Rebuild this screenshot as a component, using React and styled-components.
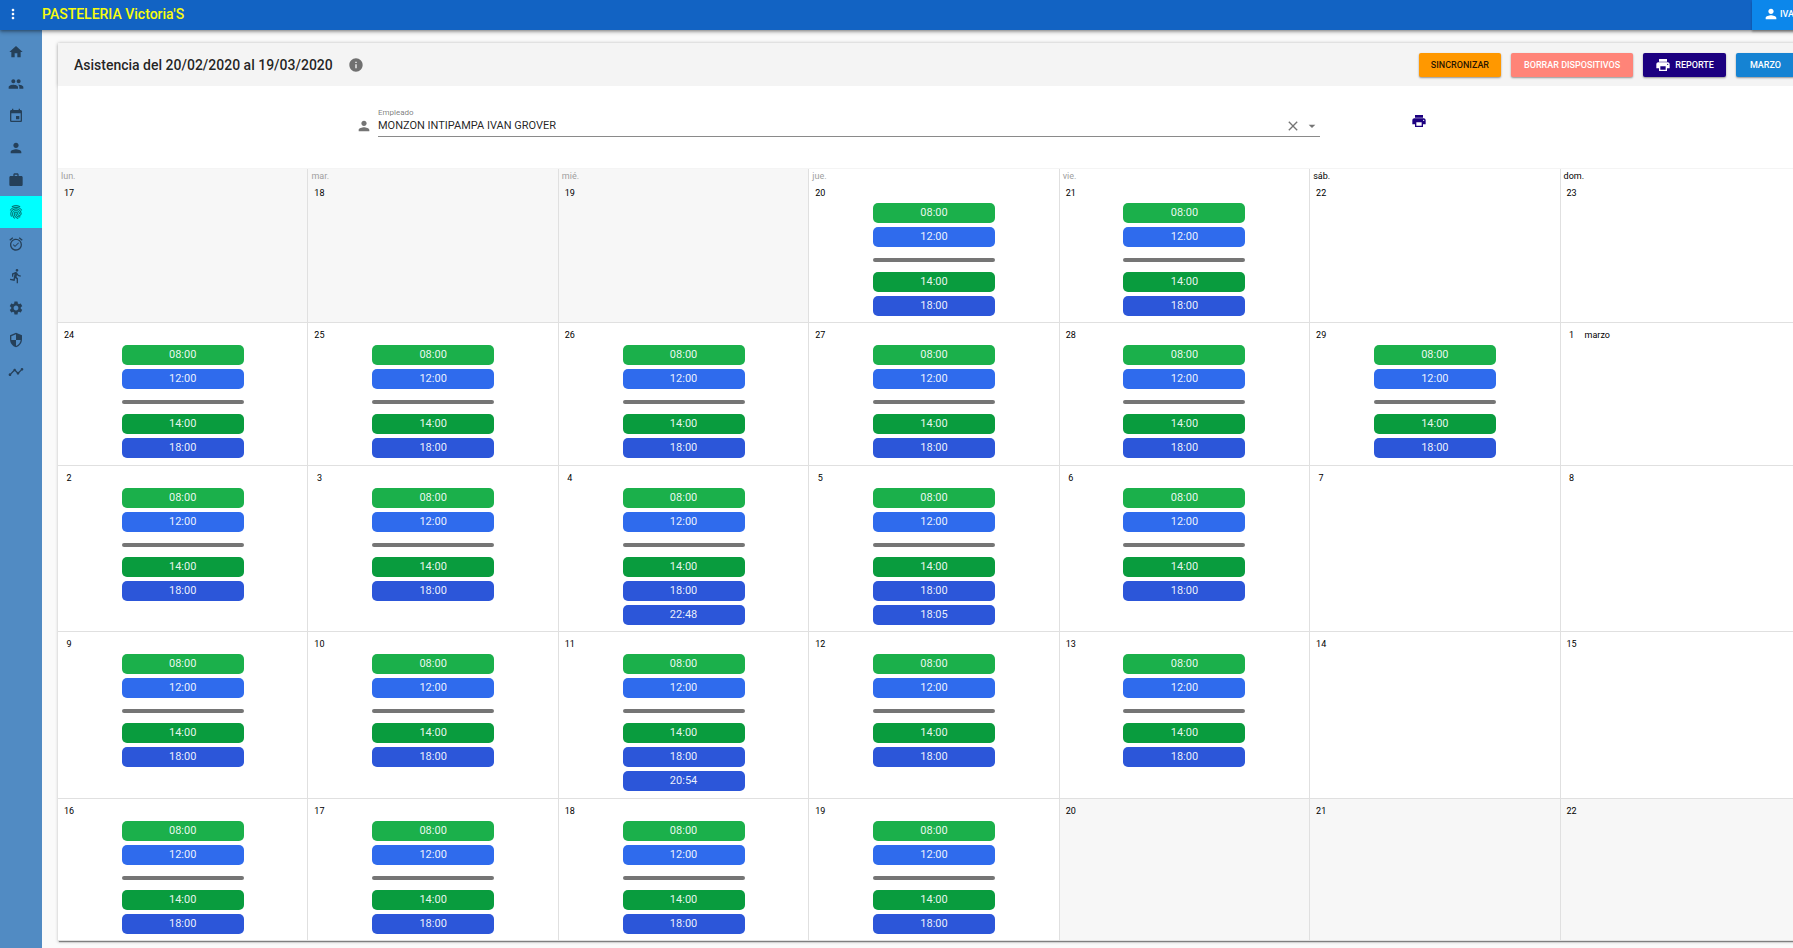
import React from 'react';
import styled, { createGlobalStyle } from 'styled-components';
import {
  MdAlarmOn, MdArrowDropDown, MdClear, MdDirectionsRun, MdEvent, MdFingerprint,
  MdHome, MdInfo, MdMoreVert, MdPeople, MdPerson, MdPrint, MdSecurity,
  MdSettings, MdTimeline, MdWork,
} from 'react-icons/md';

const GlobalStyle = createGlobalStyle`
  *, *::before, *::after { box-sizing: border-box; }
  body {
    margin: 0;
    overflow: hidden;
    background: #fafafa;
    color: rgba(0, 0, 0, 0.87);
    font-family: Roboto, "Liberation Sans", sans-serif;
    font-size: 11px;
  }
  button, select { font: inherit; color: inherit; border: 0; cursor: pointer; }
  h1, h2, p, ul, ol { margin: 0; padding: 0; font-size: inherit; font-weight: inherit; list-style: none; }
`;

/* The layout is a little wider than the window and runs off its right edge. */
const Page = styled.div`
  display: flex;
  flex-direction: column;
  width: calc(100% + 34px);
  min-height: 100vh;
`;

const TopBar = styled.header`
  position: relative;
  z-index: 2;
  display: flex;
  align-items: center;
  height: 30px;
  padding-bottom: 2px;
  flex: none;
  background: #1263c3;
  box-shadow: 0 1px 3px rgba(0, 0, 0, 0.4), 0 3px 4px rgba(0, 0, 0, 0.14);
`;

const IconButton = styled.button`
  display: flex;
  align-items: center;
  justify-content: center;
  width: ${(p) => p.$size || 16}px;
  height: ${(p) => p.$size || 16}px;
  padding: 0;
  background: transparent;
  color: ${(p) => p.$color || 'rgba(0, 0, 0, 0.54)'};
  font-size: 16px;
`;

const Brand = styled.h1`
  flex: 1;
  padding-left: 16px;
  color: #f8fc0c;
  font-size: 14px;
  font-weight: 500;
`;

const UserButton = styled.button`
  display: flex;
  align-items: center;
  width: 75px;
  height: 30px;
  margin-bottom: -2px;
  padding: 0 11px 2px;
  gap: 1px;
  background: #0c87eb;
  color: #fff;
  font-size: 9px;
  font-weight: 500;
  box-shadow: 0 2px 2px rgba(0, 0, 0, 0.25);
  svg { font-size: 16px; }
`;

const Body = styled.div`
  display: flex;
  flex: 1;
`;

const SideBar = styled.nav`
  flex: none;
  width: 42px;
  padding-top: 6px;
  background: #518bc3;
`;

const SideLink = styled.a`
  display: flex;
  align-items: center;
  height: 32px;
  padding-left: 8px;
  color: rgba(0, 0, 0, 0.54);
  background: ${(p) => (p.$active ? '#00ffff' : 'transparent')};
  font-size: 16px;
  path[fill="none"] { stroke: none; }
  svg { stroke-width: ${(p) => (p.$active ? 0.4 : 0)}; }
`;

const Main = styled.main`
  display: flex;
  flex: 1;
  min-width: 0;
  padding: 13px 16px 7px;
`;

const Card = styled.section`
  display: flex;
  flex-direction: column;
  flex: 1;
  min-width: 0;
  background: #fff;
  box-shadow: 0 2px 1px -1px rgba(0, 0, 0, 0.4), 0 1px 3px rgba(0, 0, 0, 0.24);
`;

const CardBar = styled.div`
  display: flex;
  align-items: center;
  height: 43px;
  padding: 0 16px;
  gap: 10px;
  background: #f4f4f4;
  box-shadow: 0 0 4px rgba(0, 0, 0, 0.16);
`;

const CardTitle = styled.h2`
  font-size: 14px;
  font-weight: 500;
`;

const InfoButton = styled(IconButton)`
  margin: 0 auto 0 5px;
`;

const ActionButton = styled.button`
  display: flex;
  align-items: center;
  height: 24px;
  padding: 0 ${(p) => p.$pad || 12}px;
  gap: 4px;
  border-radius: 2px;
  background: ${(p) => p.$bg};
  color: ${(p) => p.$fg || '#fff'};
  font-size: 9px;
  font-weight: 500;
  white-space: nowrap;
  box-shadow: 0 1px 2px rgba(0, 0, 0, 0.4);
  svg { font-size: 16px; }
`;

const Filter = styled.form`
  display: grid;
  grid-template-columns: 17fr 55fr 28fr;
  height: 82px;
  padding-top: 20px;
  background: #fff;
  position: relative;
`;

const Field = styled.div`
  display: flex;
  grid-column: 2;
  align-items: flex-start;
  gap: 6px;
  color: rgba(0, 0, 0, 0.54);
  > svg { flex: none; margin-top: 12px; font-size: 16px; }
`;

const FieldColumn = styled.div`
  flex: 1;
`;

const FieldLabel = styled.label`
  display: block;
  height: 12px;
  font-size: 8px;
  line-height: 14px;
`;

const FieldLine = styled.div`
  display: flex;
  align-items: center;
  gap: 3px;
  height: 19px;
  padding-bottom: 2px;
  border-bottom: 1px solid #8a8a8a;
  > svg { font-size: 16px; }
`;

const EmployeeSelect = styled.select`
  flex: 1;
  padding: 0;
  appearance: none;
  background: transparent;
  color: rgba(0, 0, 0, 0.87);
  font-size: 11px;
  line-height: 16px;
`;

const PrintSlot = styled.div`
  padding: 7px 0 0 91px;
`;

const Calendar = styled.ol`
  display: grid;
  grid-template-columns: repeat(7, minmax(0, 1fr));
  flex: 1;
  border-top: 1px solid #f4f4f4;
`;

const DayCell = styled.li`
  padding: 0 3px 6px;
  border-bottom: 1px solid #e0e0e0;
  border-right: 1px solid #e0e0e0;
  background: ${(p) => (p.$outside ? '#f7f7f7' : '#fff')};
`;

const Weekday = styled.p`
  height: 12px;
  font-size: 9px;
  line-height: 14px;
  color: ${(p) => (p.$muted ? '#9e9e9e' : '#000')};
`;

const DayNumber = styled.p`
  display: flex;
  gap: 5px;
  height: 22px;
  color: #000;
  font-size: 9px;
  line-height: 24px;
`;

const DayDigits = styled.span`
  width: 16px;
  text-align: center;
`;

const Punches = styled.ul`
  display: flex;
  flex-direction: column;
  align-items: center;
  gap: 4px;
`;

const Punch = styled.li`
  width: 122px;
  height: 20px;
  border-radius: 5px;
  background: ${(p) => p.$bg};
  color: rgba(255, 255, 255, 0.92);
  font-size: 11px;
  line-height: 19px;
  text-align: center;
`;

const Break = styled.li`
  width: 122px;
  height: 4px;
  margin: 7px 0 6px;
  border-radius: 2px;
  background: #757575;
`;

const SECTIONS = [
  ['Inicio', MdHome], ['Usuarios', MdPeople], ['Calendario', MdEvent],
  ['Empleados', MdPerson], ['Trabajo', MdWork], ['Asistencia', MdFingerprint],
  ['Horarios', MdAlarmOn], ['Permisos', MdDirectionsRun], ['Ajustes', MdSettings],
  ['Seguridad', MdSecurity], ['Reportes', MdTimeline],
];

const WEEKDAYS = ['lun.', 'mar.', 'mié.', 'jue.', 'vie.', 'sáb.', 'dom.'];

const SHIFT = ['08:00', '12:00', '14:00', '18:00'];
const COLORS = ['#1bb04b', '#2f6bed', '#099c3e', '#2c56d9'];

const WEEKS = [
  [17, 18, 19, 20, 21, 22, 23],
  [24, 25, 26, 27, 28, 29, 1],
  [2, 3, 4, 5, 6, 7, 8],
  [9, 10, 11, 12, 13, 14, 15],
  [16, 17, 18, 19, 20, 21, 22],
];

const EXTRA = { '2-2': '22:48', '2-3': '18:05', '3-2': '20:54' };

function punchesFor(week, day) {
  const worked =
    (week === 0 && (day === 3 || day === 4)) ||
    (week === 1 && day < 6) ||
    ((week === 2 || week === 3) && day < 5) ||
    (week === 4 && day < 4);
  if (!worked) return [];
  const extra = EXTRA[`${week}-${day}`];
  return extra ? [...SHIFT, extra] : SHIFT;
}

function Day({ week, day, number }) {
  const punches = punchesFor(week, day);
  const outside = (week === 0 && day < 3) || (week === 4 && day > 3);
  return (
    <DayCell $outside={outside}>
      {week === 0 && <Weekday $muted={day < 5}>{WEEKDAYS[day]}</Weekday>}
      <DayNumber>
        <DayDigits>{number}</DayDigits>
        {week === 1 && day === 6 && <span>marzo</span>}
      </DayNumber>
      {punches.length > 0 && (
        <Punches>
          {punches.map((time, i) => (
            <React.Fragment key={time}>
              {i === 2 && <Break aria-hidden="true" />}
              <Punch $bg={COLORS[Math.min(i, 3)]}>{time}</Punch>
            </React.Fragment>
          ))}
        </Punches>
      )}
    </DayCell>
  );
}

export default function App() {
  return (
    <>
      <GlobalStyle />
      <Page>
        <TopBar>
          <IconButton $size={26} $color="#fff" aria-label="Menú"><MdMoreVert /></IconButton>
          <Brand>PASTELERIA Victoria'S</Brand>
          <UserButton type="button"><MdPerson />IVA</UserButton>
        </TopBar>
        <Body>
          <SideBar>
            {SECTIONS.map(([name, Icon]) => (
              <SideLink key={name} href="#" aria-label={name} $active={name === 'Asistencia'}>
                <Icon />
              </SideLink>
            ))}
          </SideBar>
          <Main>
            <Card>
              <CardBar>
                <CardTitle>Asistencia del 20/02/2020 al 19/03/2020</CardTitle>
                <InfoButton type="button" aria-label="Información"><MdInfo /></InfoButton>
                <ActionButton type="button" $bg="#ff9800" $fg="rgba(0, 0, 0, 0.87)">SINCRONIZAR</ActionButton>
                <ActionButton type="button" $bg="#ff8478" $pad={13}>BORRAR DISPOSITIVOS</ActionButton>
                <ActionButton type="button" $bg="#1c0080"><MdPrint />REPORTE</ActionButton>
                <ActionButton type="button" $bg="#1583d3" $pad={14}>MARZO</ActionButton>
              </CardBar>
              <Filter>
                <Field>
                  <MdPerson />
                  <FieldColumn>
                    <FieldLabel htmlFor="empleado">Empleado</FieldLabel>
                    <FieldLine>
                      <EmployeeSelect id="empleado" defaultValue="monzon">
                        <option value="monzon">MONZON INTIPAMPA IVAN GROVER</option>
                      </EmployeeSelect>
                      <IconButton type="button" aria-label="Borrar"><MdClear /></IconButton>
                      <MdArrowDropDown />
                    </FieldLine>
                  </FieldColumn>
                </Field>
                <PrintSlot>
                  <IconButton type="button" $color="#1c0080" aria-label="Imprimir"><MdPrint /></IconButton>
                </PrintSlot>
              </Filter>
              <Calendar>
                {WEEKS.map((days, week) =>
                  days.map((number, day) => (
                    <Day key={`${week}-${day}`} week={week} day={day} number={number} />
                  )),
                )}
              </Calendar>
            </Card>
          </Main>
        </Body>
      </Page>
    </>
  );
}
